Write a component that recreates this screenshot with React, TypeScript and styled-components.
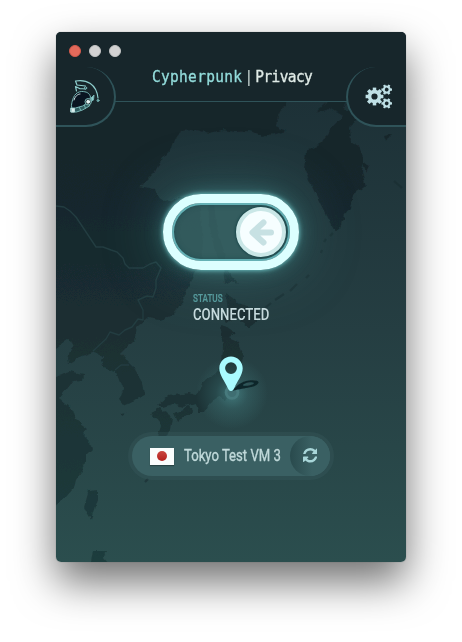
import React from 'react';
import styled, { createGlobalStyle } from 'styled-components';

const GlobalStyle = createGlobalStyle`
  html, body { margin: 0; background: #fff; }
  * { box-sizing: border-box; }
  button { appearance: none; border: 0; padding: 0; margin: 0; background: none; font: inherit; color: inherit; }
`;

const Desktop = styled.main`
  width: 462px;
  height: 642px;
  padding: 32px 56px 80px;
  overflow: hidden;
  background: #fff;
`;

const Window = styled.section`
  position: relative;
  display: flex;
  flex-direction: column;
  width: 350px;
  height: 530px;
  border-radius: 5px;
  box-shadow: 0 0 1px rgba(0, 0, 0, 0.45), 0 20px 42px rgba(0, 0, 0, 0.56);
  font-family: Roboto, 'Liberation Sans', sans-serif;
  color: #c6dcde;
`;

const MapLayer = styled.svg`
  position: absolute;
  inset: 0;
  width: 350px;
  height: 530px;
  border-radius: 5px;
`;

const TrafficLights = styled.div`
  position: relative;
  display: flex;
  gap: 8px;
  height: 35px;
  padding: 13px 0 0 13px;
  border-radius: 5px 5px 0 0;
  background: #17262b;
`;

const Light = styled.span<{ $color: string; $edge: string }>`
  width: 12px;
  height: 12px;
  border-radius: 50%;
  background: ${(p) => p.$color};
  border: 1px solid ${(p) => p.$edge};
`;

const Header = styled.header`
  position: relative;
  display: flex;
  height: 60px;
  background: linear-gradient(#17262b 34px, transparent 34px);
`;

const CornerTab = styled.button<{ $side: 'left' | 'right' }>`
  display: flex;
  align-items: center;
  justify-content: center;
  width: 60px;
  height: 60px;
  background: #17262b;
  border: 0 solid #2f5359;
  border-bottom-width: 2px;
  ${(p) =>
    p.$side === 'left'
      ? 'border-right-width: 2px; border-radius: 0 30px 30px 0;'
      : 'border-left-width: 2px; border-radius: 30px 0 0 30px; padding: 2px 0 0 3px;'}
  color: #bfe0e6;
`;

const TitleBar = styled.div`
  display: flex;
  justify-content: center;
  flex: 1;
  height: 35px;
  margin: 0 -1px;
  border-bottom: 1px solid #2f5359;
`;

const Title = styled.h1`
  display: flex;
  width: 162px;
  margin: 0 0 0 4px;
  font: 400 14.5px/20px 'DejaVu Sans Mono', monospace;
  white-space: pre;
  color: #d9e8e4;
  transform: scaleY(1.1);
  transform-origin: 0 12px;
`;

const TitleWord = styled.span<{ $accent?: boolean; $spacing: number }>`
  letter-spacing: ${(p) => p.$spacing}px;
  -webkit-text-stroke: 0.3px currentColor;
  color: ${(p) => (p.$accent ? '#93dcdb' : '#dfeae6')};
`;

const Divider = styled.span`
  display: flex;
  flex: none;
  justify-content: center;
  width: 13px;
  color: #cfdcda;
`;

const Body = styled.div`
  position: relative;
  display: flex;
  flex-direction: column;
  align-items: center;
  padding-top: 67px;
`;

const Toggle = styled.button`
  display: flex;
  align-items: center;
  justify-content: flex-end;
  width: 136px;
  height: 76px;
  padding-right: 4px;
  border: 9px solid #dcffff;
  border-radius: 38px;
  background: rgba(58, 102, 104, 0.8);
  box-shadow: 0 0 5px rgba(145, 250, 250, 0.8), 0 0 18px rgba(90, 190, 190, 0.35), 0 0 55px 6px rgba(75, 150, 150, 0.35),
    inset 0 0 0 2px #64b1b5, inset 0 0 5px 2px rgba(20, 70, 75, 0.55);
`;

const Knob = styled.span`
  display: flex;
  align-items: center;
  justify-content: center;
  width: 50px;
  height: 50px;
  border: 4px solid #cae7e7;
  border-radius: 50%;
  background: #f6feff;
  box-shadow: 0 0 2px 1px rgba(20, 65, 70, 0.75);
`;

const Status = styled.div`
  display: flex;
  flex-direction: column;
  width: 76px;
  margin-top: 22px;
  white-space: nowrap;
`;

const StatusLabel = styled.span`
  width: max-content;
  font-size: 11px;
  font-weight: 500;
  line-height: 13px;
  color: #579b9d;
  -webkit-text-stroke: 0.2px currentColor;
  transform: scaleX(0.74);
  transform-origin: left;
`;

const StatusValue = styled.strong`
  width: max-content;
  font-size: 16.5px;
  font-weight: 500;
  line-height: 19px;
  color: #c6dadd;
  transform: scaleX(0.8);
  transform-origin: left;
`;

const Marker = styled.svg`
  width: 100px;
  height: 90px;
  margin: 23px 0 -1px;
`;

const Location = styled.div`
  display: flex;
  align-items: center;
  width: 198px;
  height: 40px;
  padding-left: 18px;
  border-radius: 20px;
  background: #3a6063;
  box-shadow: 0 0 0 4px rgba(70, 105, 108, 0.2);
`;

const Flag = styled.span`
  display: flex;
  align-items: center;
  justify-content: center;
  width: 24px;
  height: 17px;
  background: #fafdfd;
  box-shadow: 0 1px 1px rgba(0, 0, 0, 0.3);
  &::before {
    content: '';
    width: 10px;
    height: 10px;
    border-radius: 50%;
    background: linear-gradient(#c94740, #b4201d);
  }
`;

const LocationName = styled.span`
  width: max-content;
  margin: 0 -30px 0 10px;
  white-space: nowrap;
  font-size: 16px;
  line-height: 20px;
  color: #c0d9da;
  -webkit-text-stroke: 0.35px currentColor;
  transform: scaleX(0.82);
  transform-origin: left;
`;

const RefreshButton = styled.button`
  display: flex;
  align-items: center;
  justify-content: center;
  width: 40px;
  height: 40px;
  margin-left: auto;
  border-radius: 50%;
  background: linear-gradient(90deg, #294a4d 0%, #3a6063 55%);
`;

function SeaMap() {
  return (
    <MapLayer viewBox="56 32 350 530" aria-hidden>
      <defs>
        <linearGradient id="sea" gradientUnits="userSpaceOnUse" x1="0" y1="100" x2="0" y2="562">
          <stop offset="0" stopColor="#1d3137" />
          <stop offset="0.5" stopColor="#253e42" />
          <stop offset="1" stopColor="#2b4e4e" />
        </linearGradient>
        <linearGradient id="land" gradientUnits="userSpaceOnUse" x1="0" y1="100" x2="0" y2="562">
          <stop offset="0" stopColor="#17262b" />
          <stop offset="0.25" stopColor="#18282d" />
          <stop offset="0.55" stopColor="#1b3033" />
          <stop offset="1" stopColor="#1f3c3d" />
        </linearGradient>
        <filter id="coast" filterUnits="userSpaceOnUse" x="40" y="20" width="380" height="560">
          <feTurbulence type="fractalNoise" baseFrequency="0.13" numOctaves="3" seed="4" result="n" />
          <feDisplacementMap in="SourceGraphic" in2="n" scale="5" xChannelSelector="R" yChannelSelector="G" />
          <feGaussianBlur stdDeviation="0.6" />
        </filter>
      </defs>
      <rect x="56" y="32" width="350" height="530" fill="url(#sea)" />
      <g fill="url(#land)" filter="url(#coast)">
        <path d="M40 90H289L286 104 278 116 276 126 286 131 275 134 262 136 250 131 236 132 222 130 210 133 195 130 181 131 175 140 172 148 160 162 155 172 147 180 139 187 155 190 157 196 165 202 174 199 188 196 199 204 202 225 203 258 196 272 190 283 183 300 173 315 159 320 148 318 137 328 134 340 121 353 128 362 134 368 143 382 145 395 134 400 123 405 119 400 123 390 119 380 116 372 104 368 101 360 104 357 93 352 79 357 69 364 68 357 74 343 68 339 56 348 40 350Z" />
        <path d="M40 380L56 377 68 372 84 375 83 380 71 383 59 398 73 410 76 420 87 428 82 434 90 442 92 449 86 455 86 463 76 480 74 488 66 497 56 505 40 508Z" />
        <path d="M316 112L328 101H347L343 108 355 111 360 118 350 126 351 142 360 148 364 160 362 172 366 186 353 195 350 208 344 215 340 228 335 232 325 213 312 187 304 168 306 152 322 143 331 128 343 116 330 108Z" />
        <path d="M208 198L214 202 216 225 224 252 228 272 238 284 231 281 225 284 223 268 214 248 209 222Z" />
        <path d="M226 293L240 304 258 309 262 318 248 328 236 318 226 323 222 318 228 311Z" />
        <path d="M223 324L230 329 236 333 229 337 238 343 243 357 241 368 234 378 231 391 225 400 218 397 211 402 205 412 198 412 196 403 183 407 173 404 163 407 158 405 168 396 188 393 197 395 202 382 214 374 222 365 223 345 220 330Z" />
        <path d="M174 413L189 406 193 412 185 416 178 422Z M150 413L160 408 172 417 170 430 165 441 158 437 161 425Z" />
        <path d="M89 490L97 489 97 500 91 519 84 507Z M93 550L107 550 104 558 112 568H90Z M384 136L391 134 386 142Z M362 162L369 166 366 172Z M121 414L128 413 122 416Z" />
      </g>
      <g fill="none" stroke="#1a2e32" strokeWidth="2.2" opacity=".65">
        <path d="M333 233L330 236M326 239L324 242M322 250L321 253M309 275L306 278M297 284L290 291M284 294L275 300M271 303L265 308" />
        <path d="M394 181L402 188M145 482L148 479" />
      </g>
      <path
        d="M56 206L64 207 70 211 76 217 82 226 88 235 96 247 103 247 111 250 117 252 123 258 125 264 129 268 143 268 150 264 156 262 161 268 156 280 156 288 153 297 147 296 138 300 143 310 143 320 138 319 132 327 125 330 119 335 110 332 106 339 93 351M115 370L121 365 129 365"
        fill="none"
        stroke="#233d41"
        strokeWidth="1.4"
        strokeLinejoin="round"
      />
    </MapLayer>
  );
}

function HelmetIcon() {
  return (
    <svg width="32" height="36" viewBox="69.5 78 32 36" fill="none" stroke="#78b5b5" strokeWidth="1" strokeLinecap="round" strokeLinejoin="round">
      <path d="M72 105C73 97 76 92 82 91.500C87 91.500 90 93 91 97L88 105L73 110Z" fill="#091421" />
      <path d="M74.500 100C75.500 96.500 78 94 80.500 94" stroke="#d5e8ea" />
      <path d="M71.500 108L76 108 83 106 91 101 90 106 83 110 77 112 71.500 112Z" fill="#2f5c60" />
      <path d="M72 108.500H75V112H72Z" fill="#dceeee" stroke="#c0dede" />
      <path d="M80 107.500L81 110 M85 105.500L86 108.500" />
      <path d="M76 81C87 79 97 84 98.500 98M76 81L77.500 85 86 86M77 91L76 86.500 80 88.500M80 88.500L86 89" stroke="#8fcfce" strokeWidth="1.2" />
      <circle cx="98.500" cy="100.500" r="1" fill="#4a8a8b" />
      <circle cx="86" cy="88" r="1.200" />
      <circle cx="88.700" cy="101.700" r="3.200" fill="#17262b" />
      <circle cx="88.700" cy="101.700" r="1.500" fill="#e2f2f2" stroke="#e2f2f2" />
      <path d="M91.500 98L94.500 95 94 100 92 101Z" fill="#8fcfce" />
    </svg>
  );
}

type GearProps = { cx: number; cy: number; ring: number; width: number; tip: number; tooth: number; turn: number; teeth: number };

function Gear({ cx, cy, ring, width, tip, tooth, turn, teeth }: GearProps) {
  return (
    <g transform={`translate(${cx} ${cy}) rotate(${turn})`} stroke="currentColor" fill="none">
      <circle r={ring} strokeWidth={width} />
      {Array.from({ length: teeth }, (_, i) => (
        <path key={i} d={`M0 ${-ring}V${-tip}`} strokeWidth={tooth} transform={`rotate(${(i * 360) / teeth})`} />
      ))}
    </g>
  );
}

function GearsIcon() {
  return (
    <svg width="28" height="26" viewBox="364.500 84 28 26">
      <Gear cx={374} cy={96.500} ring={4.900} width={3.600} tip={8.900} tooth={3.500} turn={0} teeth={8} />
      <Gear cx={386.200} cy={89.600} ring={2.900} width={2} tip={5.300} tooth={2.300} turn={30} teeth={6} />
      <Gear cx={386.200} cy={103.400} ring={2.900} width={2} tip={5.300} tooth={2.300} turn={30} teeth={6} />
    </svg>
  );
}

function PinMarker() {
  return (
    <Marker viewBox="181 347 100 90" aria-hidden>
      <defs>
        <radialGradient id="pinGlow">
          <stop offset="0" stopColor="#5aa9ab" stopOpacity=".55" />
          <stop offset=".45" stopColor="#4f999b" stopOpacity=".22" />
          <stop offset="1" stopColor="#4f999b" stopOpacity="0" />
        </radialGradient>
        <filter id="shade" x="-20%" y="-50%" width="140%" height="200%">
          <feGaussianBlur stdDeviation=".7" />
        </filter>
      </defs>
      <circle cx="232" cy="393" r="36" fill="url(#pinGlow)" />
      <circle cx="232" cy="392.500" r="7.300" fill="#477a7d" />
      <circle cx="232" cy="392.500" r="4.500" fill="#3f6e72" />
      <path
        d="M232 391C236 386 241 381.500 249 380.500C255 379.700 259.500 381 258.500 383C256 388 242 388 232 391ZM243 385.500C248 386.300 254 384.500 254 383C252 381.300 243 383 243 385.500Z"
        fill="#10272b"
        fillRule="evenodd"
        filter="url(#shade)"
      />
      <path
        d="M231 391C229.500 391 228.500 390 227.500 387.500C225 381.500 219.300 375 219.300 368.200C219.300 361.800 224.500 356.500 231 356.500S242.700 361.800 242.700 368.200C242.700 375 237 381.500 234.500 387.500C233.500 390 232.500 391 231 391ZM231 362.200A5.900 5.900 0 1 0 231 374A5.900 5.900 0 1 0 231 362.200Z"
        fill="#a9fbff"
        fillRule="evenodd"
      />
    </Marker>
  );
}

function ArrowLeft() {
  return (
    <svg width="30" height="30" viewBox="0 0 30 30" fill="none" stroke="#c7e1e3" strokeWidth="6" strokeLinecap="round" strokeLinejoin="round">
      <path d="M25 15.500H8M17.500 5.500L6.500 15.500L17.500 25.500" />
    </svg>
  );
}

function RefreshIcon() {
  return (
    <svg width="14.500" height="15.700" viewBox="0 0 1536 1664" fill="#a8d6d9">
      <path d="M1511 928q0 5-1 7-64 268-268 434.500t-478 166.500q-146 0-282.500-55t-243.500-157l-129 129q-19 19-45 19t-45-19-19-45v-448q0-26 19-45t45-19h448q26 0 45 19t19 45-19 45l-137 137q71 66 161 102t187 36q134 0 250-65t186-179q11-17 53-117 8-23 30-23h192q13 0 22.500 9.500t9.500 22.500zm25-800v448q0 26-19 45t-45 19h-448q-26 0-45-19t-19-45 19-45l138-138q-148-137-349-137-134 0-250 65t-186 179q-11 17-53 117-8 23-30 23h-199q-13 0-22.500-9.500t-9.500-22.500v-7q65-268 270-434.500t480-166.500q146 0 284 55.500t245 156.500l130-129q19-19 45-19t45 19 19 45z" />
    </svg>
  );
}

export default function App() {
  return (
    <Desktop>
      <GlobalStyle />
      <Window>
        <SeaMap />
        <TrafficLights>
          <Light $color="#e36a5b" $edge="#d25a4c" />
          <Light $color="#d2d2d2" $edge="#c2c4c4" />
          <Light $color="#d2d2d2" $edge="#c2c4c4" />
        </TrafficLights>
        <Header>
          <CornerTab $side="left" aria-label="Account">
            <HelmetIcon />
          </CornerTab>
          <TitleBar>
            <Title>
              <TitleWord $accent $spacing={0.3}>Cypherpunk</TitleWord>
              <Divider>|</Divider>
              <TitleWord $spacing={-0.6}>Privacy</TitleWord>
            </Title>
          </TitleBar>
          <CornerTab $side="right" aria-label="Settings">
            <GearsIcon />
          </CornerTab>
        </Header>
        <Body>
          <Toggle role="switch" aria-checked="true" aria-label="Connection">
            <Knob>
              <ArrowLeft />
            </Knob>
          </Toggle>
          <Status>
            <StatusLabel>STATUS</StatusLabel>
            <StatusValue>CONNECTED</StatusValue>
          </Status>
          <PinMarker />
          <Location>
            <Flag />
            <LocationName>Tokyo Test VM 3</LocationName>
            <RefreshButton aria-label="Change location">
              <RefreshIcon />
            </RefreshButton>
          </Location>
        </Body>
      </Window>
    </Desktop>
  );
}
